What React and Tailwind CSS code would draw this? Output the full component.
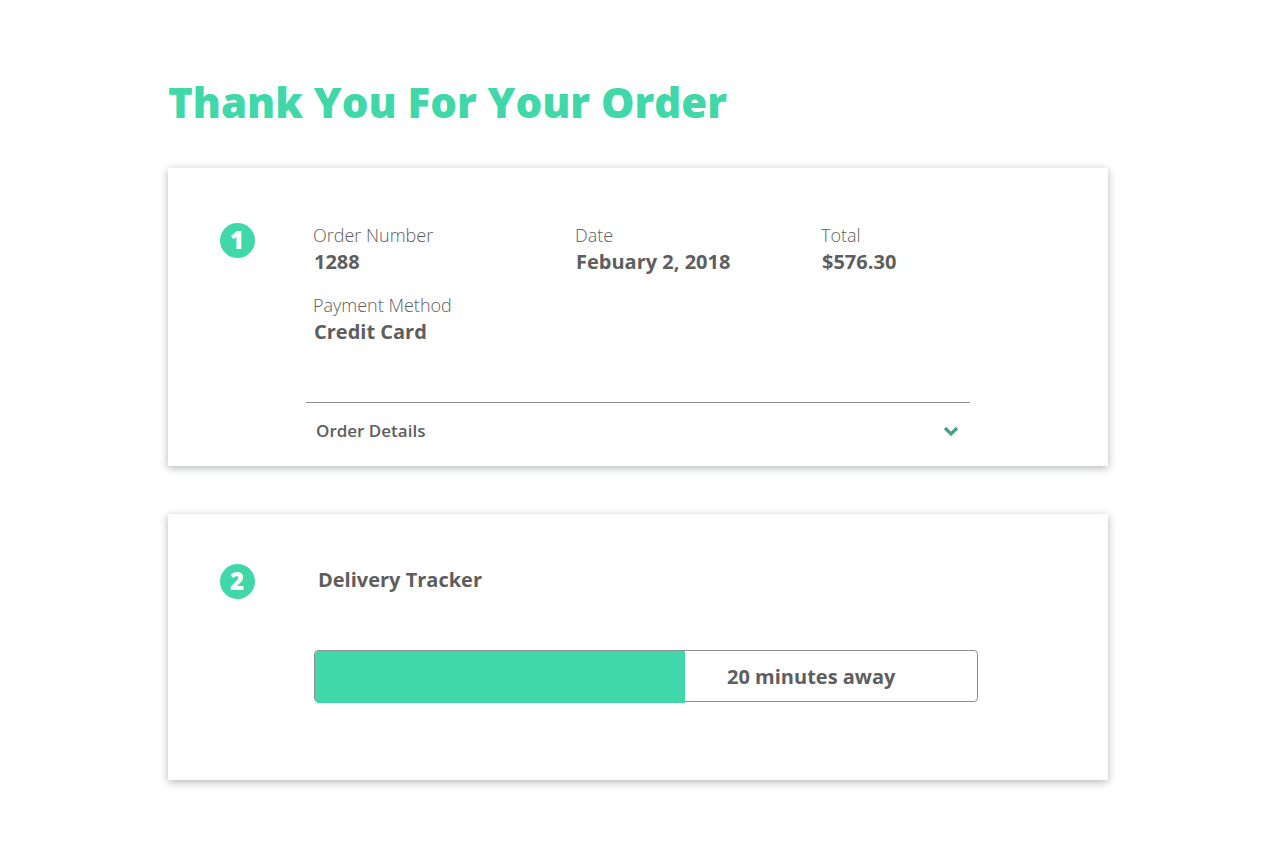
import { useState } from 'react';
import clsx from 'clsx';

const ORDER_INFO = [
    { label: 'Order Number', value: '1288' },
    { label: 'Date', value: 'Febuary 2, 2018' },
    { label: 'Total', value: '$576.30' },
    { label: 'Payment Method', value: 'Credit Card' },
];

const DELIVERY = { progress: 55.9, eta: '20 minutes away' };

function Card({ step, className, children }) {
    return (
        <section className={clsx('flex bg-white px-[52px] shadow-[0_2px_8px_rgba(60,64,67,0.4)]', className)}>
            <span className="flex size-[35px] shrink-0 justify-center rounded-full bg-[#40d8a9] pr-px text-2xl leading-[34px] font-extrabold text-white">
                {step}
            </span>
            <div className="min-w-0 flex-1">{children}</div>
        </section>
    );
}

function Chevron({ open }) {
    return (
        <svg width="16" height="12" viewBox="0 0 16 12" className={clsx(open && 'rotate-180')} aria-hidden="true">
            <path d="M2 3 L8 9 L14 3" fill="none" stroke="#469f86" strokeWidth="3.2" />
        </svg>
    );
}

export default function App() {
    const [open, setOpen] = useState(false);

    return (
        <main className="mx-auto w-full max-w-[944px] pt-[72px] pr-1 pb-16 font-['Open_Sans',sans-serif] text-[#5e5e5e]">
            <h1 className="text-[42px] leading-[60px] font-extrabold text-[#40d8a9]">Thank You For Your Order</h1>

            <div className="mt-9 flex flex-col gap-12">
                {/* Order summary */}
                <Card step="1" className="pt-[55px] pb-2">
                    <dl className="ml-[58px] grid grid-cols-[262px_246px_1fr] gap-y-4">
                        {ORDER_INFO.map((item) => (
                            <div key={item.label}>
                                <dt className="text-lg leading-6 font-light">{item.label}</dt>
                                <dd className="pl-px text-xl leading-[30px] font-bold">{item.value}</dd>
                            </div>
                        ))}
                    </dl>
                    <button
                        type="button"
                        aria-expanded={open}
                        onClick={() => setOpen(!open)}
                        className="mt-[55px] ml-[51px] flex h-14 w-full max-w-[664px] items-center justify-between border-t border-[#8f8f8f] pr-[11px] pl-[10px] text-[17px] font-semibold"
                    >
                        Order Details
                        <Chevron open={open} />
                    </button>
                </Card>

                {/* Delivery progress */}
                <Card step="2" className="pt-[50px] pb-[78px]">
                    <h2 className="ml-[63px] text-xl leading-8 font-bold">Delivery Tracker</h2>
                    <div className="mt-[54px] ml-[59px] flex h-[52px] w-full max-w-[664px] rounded border border-[#8f8f8f]">
                        <div
                            className="-mb-[2px] rounded-l bg-[#40d8a9]"
                            style={{ width: `${DELIVERY.progress}%` }}
                        />
                        <span className="ml-[42px] text-xl leading-[52px] font-bold">{DELIVERY.eta}</span>
                    </div>
                </Card>
            </div>
        </main>
    );
}
